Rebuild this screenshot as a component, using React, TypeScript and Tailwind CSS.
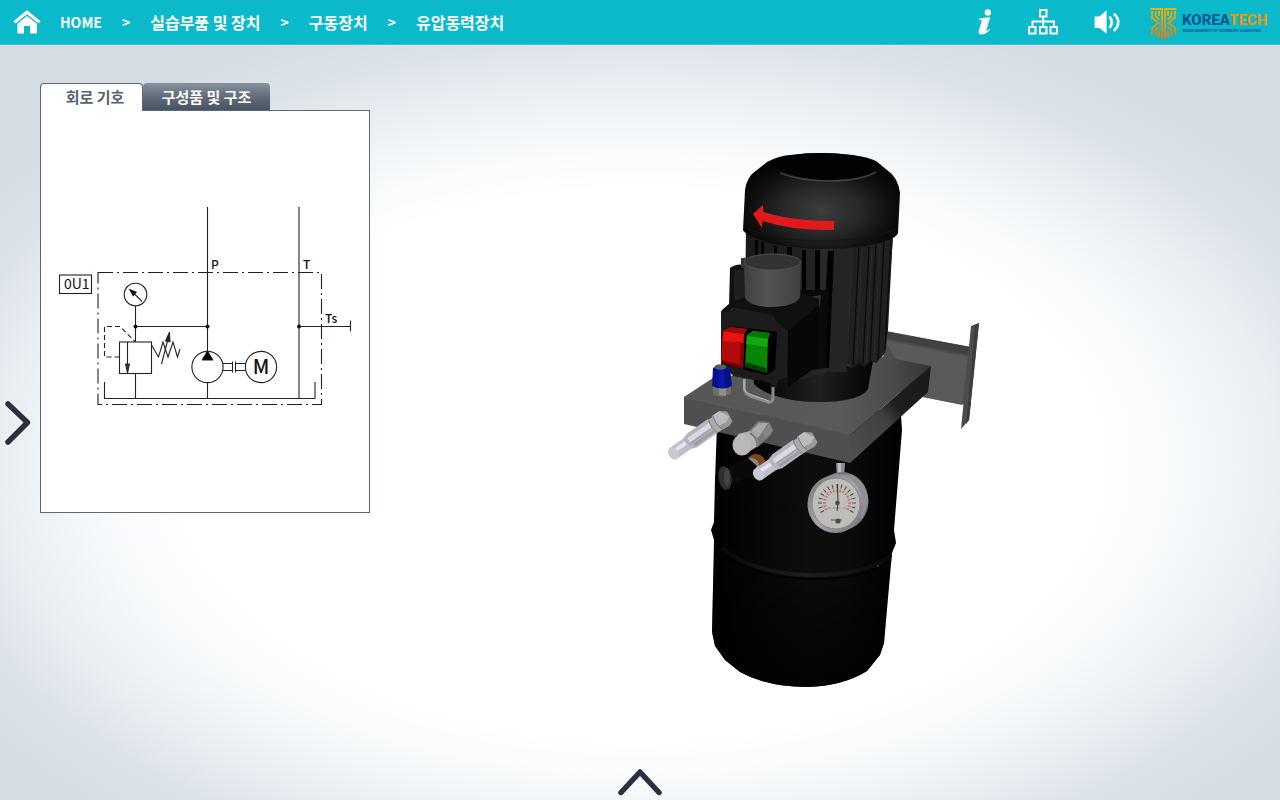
import React, { useState } from "react";

const crumbs = ["HOME", "실습부품 및 장치", "구동장치", "유압동력장치"];

function HomeIcon() {
  return (
    <svg width="28" height="24" viewBox="0 0 28 24" fill="white" aria-hidden="true">
      <path d="M14 0 L27.6 11.2 L25.6 13.4 L14 4.2 L2.4 13.4 L0.4 11.2 Z" />
      <path d="M14 6 L24 13.8 V23.6 H17 V16 H11 V23.6 H4.4 V13.8 Z" />
    </svg>
  );
}

function InfoIcon() {
  return (
    <svg width="16" height="26" viewBox="0 0 16 26" fill="white" aria-hidden="true">
      <circle cx="10.8" cy="3.4" r="3.2" />
      <path d="M3 9.4 C6 9 9 8.4 13.2 8.2 L9.6 20.4 C9.2 21.8 10 22 12.8 20 L13.2 20.8 C9.8 24.4 7 25.6 4.4 25.6 C1.8 25.6 1.2 23.8 1.8 21.6 L4.6 12.2 C5 11 4.4 10.8 1.2 11.2 Z" />
    </svg>
  );
}

function SitemapIcon() {
  return (
    <svg width="30" height="26" viewBox="0 0 30 26" fill="none" stroke="white" strokeWidth="2" aria-hidden="true">
      <rect x="12" y="1" width="6.5" height="6.5" />
      <rect x="1" y="18" width="6.5" height="6.5" />
      <rect x="12" y="18" width="6.5" height="6.5" />
      <rect x="22.5" y="18" width="6.5" height="6.5" />
      <path d="M15.2 8 V18 M4.5 18 V12.5 H26 V18" />
    </svg>
  );
}

function SoundIcon() {
  return (
    <svg width="26" height="24" viewBox="0 0 26 24" fill="none" stroke="white" strokeLinecap="round" aria-hidden="true">
      <path d="M0.6 6.4 H5.4 L12.6 0.2 V23.8 L5.4 18 H0.6 Z" fill="white" stroke="none" />
      <path d="M16 7.4 C18.4 10 18.4 14.4 16 17" strokeWidth="2.6" />
      <path d="M20.6 4.4 C25.4 8.6 25.4 15.6 20.6 20" strokeWidth="2.6" />
    </svg>
  );
}

function SchoolLogo() {
  return (
    <svg width="121" height="36" viewBox="1150 5 121 36" role="img" aria-label="KOREATECH">
      <defs>
        <linearGradient id="crest" x1="0" y1="9" x2="0" y2="40" gradientUnits="userSpaceOnUse">
          <stop offset="0" stopColor="#f0b400" />
          <stop offset="1" stopColor="#db7a1c" />
        </linearGradient>
      </defs>
      <g fill="none" stroke="url(#crest)" strokeWidth="1.9">
        <path d="M1150.5 10.01 L1162.8 10 M1152 12 V18.5 L1158.5 24 L1152 29 V35.5 M1155.6 12.5 V17 L1159.4 20.5 M1159 12 V17 M1162 9 V40 M1159.2 27.5 L1155.6 31 V37 M1159 31.5 V39" />
        <path d="M1176.5 10.01 L1164.2 10 M1175 12 V18.5 L1168.5 24 L1175 29 V35.5 M1171.4 12.5 V17 L1167.6 20.5 M1168 12 V17 M1165 9 V40 M1167.8 27.5 L1171.4 31 V37 M1168 31.5 V39" />
      </g>
      <text x="1182" y="26" fontSize="15" fontWeight="800" className="font-['Roboto',sans-serif]">
        <tspan fill="#0b5596">KOREA</tspan>
        <tspan fill="#e9980c">TECH</tspan>
      </text>
      <text x="1183" y="33" fontSize="3" fontWeight="800" fill="#0b5596" className="font-['Inter',sans-serif]">
        KOREA UNIVERSITY OF TECHNOLOGY &amp; EDUCATION
      </text>
    </svg>
  );
}

function CircuitDiagram() {
  return (
    <svg
      viewBox="41 111 328 401"
      className="block w-full font-['Noto_Sans_CJK_KR','Noto_Sans',sans-serif]"
      fill="none"
      stroke="#222"
      strokeWidth="1.1"
      role="img"
      aria-label="회로 기호"
    >
      <path d="M98 272.5 H321.5 V404.5 H98 Z" strokeDasharray="15 4 2 4" />
      <path d="M207.5 207 V351 M207.5 382.5 V398 M299 207 V398 M299 326.5 H350.5 M350.5 320.5 V331.5" />
      <path d="M104.5 382 V398.5 H315 V382" />
      <path d="M135.5 306 V342 M135.5 373 V398 M135.5 326.5 H207.5" />
      <circle cx="135.5" cy="294.5" r="11.3" />
      <path d="M142 301.500 L132 291.500" />
      <path d="M128.500 288.500 L137 292 L133 296.500 Z" fill="#111" stroke="none" />
      <rect x="119.500" y="342" width="32" height="31.500" />
      <path d="M127.500 342 V366" />
      <path d="M125.500 364 H129.500 L127.500 373 Z" fill="#333" strokeWidth="1" />
      <path d="M119.500 357 H104.500 V326.500 H120 L135 341.500" strokeDasharray="5 3" />
      <path d="M151.500 345 L158.500 357 L163 342 L168 357 L173 342 L177.500 357 L180 349" />
      <path d="M161.500 364 L168 339" />
      <path d="M169.500 332 L165.500 341 L170 342 Z" fill="#222" strokeWidth="1" />
      <circle cx="207.500" cy="367" r="15.600" />
      <path d="M207.500 351 L213 360 H202 Z" fill="#000" strokeWidth="1" />
      <path d="M223 363.500 H232 M223 370.500 H232 M232.500 361.500 V372.500 M235.500 361.500 V372.500 M236 363.500 H245.500 M236 370.500 H245.500" />
      <circle cx="261" cy="367" r="15.600" />
      <rect x="59.500" y="275" width="32" height="18.500" />
      <g fill="#111" stroke="none">
        <circle cx="135.500" cy="326.500" r="2" />
        <circle cx="207.500" cy="326.500" r="2" />
        <circle cx="299" cy="326.500" r="2" />
        <text x="64" y="289" fontSize="14">0U1</text>
        <text x="211" y="269" fontSize="12" fontWeight="500">P</text>
        <text x="303" y="269" fontSize="12" fontWeight="500">T</text>
        <text x="325" y="323" fontSize="12" fontWeight="500">Ts</text>
        <text x="261" y="374" fontSize="20" fontWeight="500" textAnchor="middle">M</text>
      </g>
    </svg>
  );
}

function Connector() {
  return (
    <g transform="rotate(145)">
      <path d="M-8 -7 L-3 -9 L6 -8 L8 0 L6 9 L-3 9 L-9 4 Z" fill="#98989a" />
      <path d="M-8 -1 L-3 -4 L6 -3 L7 5 L5 9 L-3 9 Z" fill="#bcbcbe" />
      <path d="M5 -8 H12 Q15 0 12 8 H5 Q8 0 5 -8 Z" fill="#a9a9ac" />
      <path d="M11 -8 H36 L42 -6 Q45 0 42 7 L36 9 H11 Q14 0 11 -8 Z" fill="#b4b4bd" />
      <path d="M13 0 H39 V5 H12 Z" fill="#d9d9e2" />
      <path d="M13 -6 H37 V-3 H13 Z" fill="#9c9ca5" />
      <path d="M14 -1 H38" stroke="#8b8b94" strokeWidth="0.800" />
      <path d="M11 -8 Q14 0 11 8 M5 -8 Q8 0 5 8" fill="none" stroke="#77777c" strokeWidth="0.900" />
      <path d="M41 -6 H59 V7 H41 Q44 0 41 -6 Z" fill="#bfbfca" />
      <path d="M43 0 H58 V4 H43 Z" fill="#e4e4ee" />
      <ellipse cx="59" cy="0.500" rx="5" ry="6.500" fill="#c9c9d5" />
    </g>
  );
}

const ticks = Array.from({ length: 17 }, (_, i) => -120 + i * 15);

function PowerUnit() {
  return (
    <svg viewBox="660 152 330 541" className="block w-[330px] max-w-full" role="img" aria-label="유압동력장치">
      <defs>
        <radialGradient id="cap" cx="0.5" cy="0.6" r="0.55">
          <stop offset="0" stopColor="#3d3d3d" />
          <stop offset="0.45" stopColor="#282828" />
          <stop offset="0.8" stopColor="#0f0f0f" />
          <stop offset="1" stopColor="#060606" />
        </radialGradient>
        <linearGradient id="body">
          <stop offset="0" stopColor="#191919" />
          <stop offset="0.45" stopColor="#222" />
          <stop offset="0.68" stopColor="#343434" />
          <stop offset="0.75" stopColor="#1b1b1b" />
          <stop offset="1" stopColor="#1d1d1d" />
        </linearGradient>
        <linearGradient id="base">
          <stop offset="0" stopColor="#000" />
          <stop offset="0.55" stopColor="#202020" />
          <stop offset="1" stopColor="#030303" />
        </linearGradient>
        <linearGradient id="tank">
          <stop offset="0" stopColor="#000" />
          <stop offset="0.5" stopColor="#0d0d0d" />
          <stop offset="0.7" stopColor="#0b0b0b" />
          <stop offset="1" stopColor="#000" />
        </linearGradient>
        <linearGradient id="tankShade" x1="0" y1="0" x2="0" y2="1">
          <stop offset="0" stopColor="#000" stopOpacity="0" />
          <stop offset="1" stopColor="#000" stopOpacity="0.8" />
        </linearGradient>
        <linearGradient id="ring">
          <stop offset="0" stopColor="#080808" />
          <stop offset="0.5" stopColor="#1f1f1f" />
          <stop offset="1" stopColor="#080808" />
        </linearGradient>
        <linearGradient id="cup">
          <stop offset="0" stopColor="#3f3f42" />
          <stop offset="0.4" stopColor="#545457" />
          <stop offset="1" stopColor="#404043" />
        </linearGradient>
        <linearGradient id="plateSide" x1="850" y1="450" x2="930" y2="380" gradientUnits="userSpaceOnUse">
          <stop offset="0" stopColor="#4e4e4e" />
          <stop offset="0.45" stopColor="#3f3f3f" />
          <stop offset="0.6" stopColor="#1f1f1f" />
          <stop offset="1" stopColor="#191919" />
        </linearGradient>
        <linearGradient id="plateTop" x1="690" y1="400" x2="930" y2="370" gradientUnits="userSpaceOnUse">
          <stop offset="0" stopColor="#565656" />
          <stop offset="0.6" stopColor="#5a5a5a" />
          <stop offset="0.85" stopColor="#4a4a4a" />
          <stop offset="1" stopColor="#333" />
        </linearGradient>
        <linearGradient id="rim" x1="0" y1="0" x2="1" y2="1">
          <stop offset="0" stopColor="#77777b" />
          <stop offset="0.5" stopColor="#a5a5aa" />
          <stop offset="1" stopColor="#737378" />
        </linearGradient>
      </defs>

      {/* wall bracket */}
      <path d="M886 331 L971 347 L971 406 L923 397 L880 388 Z" fill="#4d4d4d" />
      <path d="M887 332 L970 347 L968 355 L886 338 Z" fill="#414141" />
      <path d="M884 340 L968 357 L962 405 L923 397 L900 365 Z" fill="#5a5a5a" />
      <path d="M971 326 L979 323 L969 420 L961 429 Z" fill="#4c4c4c" />
      <path d="M979 323 L969 420 L966 424 L975 325 Z" fill="#3e3e3e" />

      {/* reservoir */}
      <path
        d="M717 425 L715 480 L714 522 L711 530 L714 540 L712 632 L715 646 L725 660 L740 672 Q767 687 807 687 Q843 686 867 671 L880 655 L884 643 L892 553 L896 543 L894 530 L898 480 L902 430 L901 415 L840 400 Z"
        fill="url(#tank)"
      />
      <path d="M714 548 Q807 605 891 555 L884 643 L880 655 L867 671 Q843 686 807 687 Q767 687 740 672 L725 660 L715 646 L712 632 Z" fill="url(#tankShade)" />
      <path d="M722 548 C740 565 775 574 808 575 C850 576 880 566 891 555" fill="none" stroke="url(#ring)" strokeWidth="4" />
      <path d="M724 553 C742 570 775 578 808 579 C850 580 880 571 891 559" fill="none" stroke="#000" strokeWidth="2" />
      <circle cx="878" cy="566" r="0.700" fill="#777" />

      {/* manifold plate */}
      <path d="M684 397 L713 378 L880 356 L931 366 L850 435 Z" fill="url(#plateTop)" />
      <path d="M684 397 L850 435 L850 463 L684 424 Z" fill="#4f4f4f" />
      <path d="M850 435 L931 366 L928 392 L850 463 Z" fill="url(#plateSide)" />
      <path d="M684 397 L850 435" stroke="#575757" strokeWidth="1" />

      {/* motor foot and finned body */}
      <path d="M753 372 L754 384 C765 396 795 403 827 402 C850 401 864 396 868 389 L874 355 L790 340 Z" fill="url(#base)" />
      <path d="M746 230 L745 300 L790 378 L800 380 L847 366 L852 368 L860 363 L864 367 L871 361 L876 363 L885 353 L888 330 L893 232 Z" fill="url(#body)" />
      <path d="M833 246 H851 L847 372 H826 Z" fill="#242424" />
      <path d="M854 248 L847 363 L852 366 L858 362 L864 365 L870 360 L876 361 L885 353 L893 236 Z" fill="#202020" />
      <path d="M859 248 L853 365 M869 247 L863 364 M876 245 L870 361 M884 242 L878 360 M891 240 L885 350" stroke="#0b0b0b" strokeWidth="1.300" fill="none" />
      <path d="M862 248 L856 362 M872 247 L866 362 M880 244 L874 360" stroke="#2b2b2b" strokeWidth="1" fill="none" />
      <path d="M755 240 H758 V262 H755 Z M761 242 H764 V264 H761 Z M774 246 H777 V262 H774 Z M787 247 H792 V264 H787 Z M802 250 H806 V292 H802 Z M815 250 H820 V293 H815 Z M828 251 H834 L829 368 H821 Z" fill="#000" />
      <path d="M800 290 H829 L826 368 L812 370 Z" fill="#090909" />
      <path d="M810 297 L821 295 L820 307 L815 309 Z" fill="#303030" />
      <circle cx="815" cy="302" r="2" fill="#555" />

      {/* fan cover */}
      <path
        d="M743 230 L745 190 Q747 176 757 170 L767 162 Q778 156 790 155 Q820 151 853 155 Q868 157 876 161 L887 170 Q898 177 900 193 L898 233 Q897 237 886 241 Q860 249 820 249 Q775 248 751 236 Q744 233 743 230 Z"
        fill="url(#cap)"
      />
      <path d="M768 162 Q790 153 820 153 Q860 153 881 165 Q872 178 830 180 Q790 180 768 162 Z" fill="#020202" />
      <path d="M780 173 Q800 181 830 181 Q860 181 876 172" fill="none" stroke="#505050" strokeWidth="1.500" opacity="0.700" />
      <path d="M748 229 Q775 241 820 241 Q870 240 898 229" fill="none" stroke="#151515" strokeWidth="1" />
      <path d="M753 214 L763 205 L763.500 212 Q792 221 834 221 L834 230 Q795 231 762.500 221 L762 228 Z" fill="#e01a1c" />

      {/* capacitor and cup */}
      <path d="M730 268 Q736 263 745 265 V304 L729 306 Z" fill="#111" />
      <path d="M734 270 H745 V300 H734 Z" fill="#1f1f1f" />
      <path d="M741 258 H746 V268 H741 Z" fill="#343434" />

      {/* switch box */}
      <path d="M722 310 L730 303 L745 297 L800 293 L819 299 L817 366 L788 387 L776 389 L766 382 L734 376 L721 366 Z" fill="#101010" />
      <path d="M721 311 L728 312 L732 307 L773 315 L777 322 L788 331 L787 377 L778 380 L776 388 L768 382 L734 376 L721 366 Z" fill="#1c1c1c" />
      <path d="M788 331 L819 305 L817 366 L788 387 Z" fill="#070707" />
      <path d="M723 331 L730 326 L777 332 L775 370 L766 375 L721 364 Z" fill="#000" />
      <path d="M744 262 L745 298 Q750 307 772 307 Q796 306 800 297 L801 262 Z" fill="url(#cup)" />
      <ellipse cx="772.500" cy="262" rx="28" ry="8" fill="#333336" stroke="#4f4f52" strokeWidth="1" />
      <path d="M723 331 L730 327 L747 329 L744 334 L743 369 L721 363 Z" fill="#b50a0a" />
      <path d="M724 331 L744 334 L743 344 L740 342 L722 341 Z" fill="#e81212" />
      <path d="M740 342 L744 344 L743 369 L740 366 Z" fill="#800" />
      <path d="M723 331 L730 327 L747 329 L744 334 Z" fill="#9d0909" />
      <path d="M722 360 L741 365 L743 369 L721 363 Z" fill="#650000" />
      <path d="M747 335 L753 331 L770 333 L768 340 L767 373 L745 366 Z" fill="#078507" />
      <path d="M747 336 L768 339 L767 347 L746 344 Z" fill="#12a812" />
      <path d="M747 335 L753 331 L770 333 L768 338 Z" fill="#087408" />
      <path d="M746 362 L766 368 L767 373 L745 367 Z" fill="#034203" />

      {/* handle loop, valve cap */}
      <path d="M744.500 379 V388 Q744 393 750 396 L768 402 Q773 403 773 397 V387" fill="none" stroke="#8c8c8c" strokeWidth="3" />
      <path d="M744 380 V389 Q745 393 752 395 L769 401" fill="none" stroke="#c2c2c2" strokeWidth="1" />
      <path d="M713 386 L731 386 L731 394 L722 397 L713 395 Z" fill="#6e6e6c" />
      <path d="M719 388 H726 V396 L719 395 Z" fill="#8e8e8b" />
      <path d="M713 368 Q721 362 730 368 L732 386 Q722 391 712 386 Z" fill="#07108a" />
      <path d="M718 369 L724 369 L725 388 L718 388 Z" fill="#0a17a5" />
      <ellipse cx="720.500" cy="367" rx="6" ry="2.700" fill="#555b60" />

      {/* drain knob */}
      <ellipse cx="756" cy="464" rx="10" ry="10" fill="#804321" />
      <ellipse cx="751" cy="466" rx="8" ry="8" fill="#8a8a8a" />
      <path d="M728 468 L748 458 L757 466 L752 476 L732 484 Z" fill="#0c0c0c" />
      <ellipse cx="744" cy="470" rx="11" ry="9" fill="#080808" />
      <ellipse cx="725" cy="478" rx="6.500" ry="12" transform="rotate(-10 725 478)" fill="#2f2f2f" />
      <ellipse cx="727" cy="477" rx="3" ry="9" fill="#444" />

      {/* hose connectors */}
      <g transform="translate(722 420)">
        <Connector />
      </g>
      <g>
        <path d="M748 432 L758 421 L769 422 L773 430 L770 436 L758 447 Z" fill="#77777a" />
        <path d="M751 431 L759 423 L768 423 L763 431 L758 438 Z" fill="#a9a9ac" />
        <path d="M763 431 L770 424 L773 431 L764 440 Z" fill="#858588" />
        <path d="M738 434 L750 431 Q760 438 758 446 L744 455 Z" fill="#b3b3b3" />
        <ellipse cx="742" cy="445" rx="9.500" ry="10.500" fill="#b9b9b9" />
        <path d="M750 433 Q758 438 757 446" fill="none" stroke="#74746d" strokeWidth="1.500" />
      </g>
      <g transform="translate(807 441)">
        <Connector />
      </g>

      {/* pressure gauge */}
      <path d="M836 463 H845 L844 478 H837 Z" fill="#8f8f8c" />
      <path d="M838 463 H841 V478 H838 Z" fill="#bcbcb9" />
      <ellipse cx="842" cy="501" rx="26.500" ry="29" fill="#77777c" />
      <path d="M834 474 L852 475 Q868 483 868 503 L862 519 L836 500 Z" fill="#909095" />
      <ellipse cx="835.500" cy="504" rx="28" ry="29" fill="url(#rim)" />
      <ellipse cx="836" cy="503.500" rx="24" ry="25.500" fill="#bebdb9" stroke="#88888b" strokeWidth="1" />
      {ticks.map((a) => (
        <g key={a} transform={`rotate(${a} 837 503)`}>
          <path d="M837 484 V488" stroke="#484848" strokeWidth="1" />
          <path d="M837 489 V492" stroke="#b55349" strokeWidth="1.600" opacity="0.600" />
        </g>
      ))}
      <path d="M837.500 484 L838 503 L837 511" stroke="#333" strokeWidth="1" fill="none" />
      <circle cx="837.500" cy="503" r="2.300" fill="#494949" />
      <path d="M828 508 H846" stroke="#999" strokeWidth="1.500" strokeDasharray="3 2" />
      <circle cx="838" cy="521" r="2.600" fill="#4b4b4b" />
      <path d="M831 520 H842" stroke="#555" strokeWidth="1" />
    </svg>
  );
}

export default function App() {
  const [tab, setTab] = useState(0);
  return (
    <div className="relative flex min-h-screen flex-col overflow-hidden bg-white bg-[radial-gradient(ellipse_58%_55%_at_50%_58%,#ffffff_0%,#ffffff_62%,#f5f8fa_75%,#e9eef2_86%,#dce3ea_96%,#d5dce4_108%)] font-['Noto_Sans_CJK_KR',sans-serif]">
      <header className="flex h-[45px] items-center border-b border-[#48bdca] bg-[#0ab9ca] pr-[9px] pl-[13px] text-base text-white">
        <a href="#home" aria-label="HOME">
          <HomeIcon />
        </a>
        <nav aria-label="breadcrumb" className="ml-[19px] flex items-center gap-5 font-bold whitespace-nowrap">
          {crumbs.map((c, i) => (
            <React.Fragment key={c}>
              {i > 0 && <span className="text-sm">&gt;</span>}
              <a href={`#level-${i}`} className={i === 0 ? "text-sm" : "text-base"}>
                {c}
              </a>
            </React.Fragment>
          ))}
        </nav>
        <div className="ml-auto flex items-center">
          <button aria-label="정보" className="mr-[35px]">
            <InfoIcon />
          </button>
          <button aria-label="사이트맵" className="mr-9">
            <SitemapIcon />
          </button>
          <button aria-label="소리" className="mr-[30px]">
            <SoundIcon />
          </button>
          <SchoolLogo />
        </div>
      </header>

      <main className="flex flex-1">
        <button aria-label="메뉴 열기" className="flex w-10 items-center self-center pl-[3px]">
          <svg width="30" height="48" viewBox="0 0 30 48" fill="none" strokeLinecap="round" strokeLinejoin="round" aria-hidden="true">
            <path d="M5 5 L24.500 23.500 L5 43" stroke="white" strokeOpacity="0.500" strokeWidth="8" />
            <path d="M5 5 L24.500 23.500 L5 43" stroke="#2a303e" strokeWidth="5.500" />
          </svg>
        </button>

        <section className="w-[330px] shrink-0 pt-[38px]">
          <div role="tablist" className="flex items-start text-[15px] leading-[22px] font-bold">
            <button
              role="tab"
              aria-selected={tab === 0}
              onClick={() => setTab(0)}
              className="relative z-10 -mb-px h-[28px] w-[103px] rounded-t border border-b-0 border-[#5c6978] bg-white pb-[2px] pl-[7px] text-[#566170]"
            >
              회로 기호
            </button>
            <button
              role="tab"
              aria-selected={tab === 1}
              onClick={() => setTab(1)}
              className="h-[27px] w-[127px] rounded-t bg-linear-to-b from-[#8a929f] via-[#626c7a] to-[#485463] text-white"
            >
              구성품 및 구조
            </button>
          </div>
          <div role="tabpanel" className="border border-[#5c6978] bg-white">
            <CircuitDiagram />
          </div>
        </section>

        <section className="flex flex-1 items-center justify-center">
          <PowerUnit />
        </section>
      </main>

      <button aria-label="도구 열기" className="absolute bottom-0 left-1/2 -translate-x-1/2">
        <svg width="50" height="36" viewBox="0 0 50 36" fill="none" strokeLinecap="round" strokeLinejoin="round" aria-hidden="true">
          <path d="M6 28.500 L25 8 L44 28.500" stroke="white" strokeOpacity="0.500" strokeWidth="8" />
          <path d="M6 28.500 L25 8 L44 28.500" stroke="#2a303e" strokeWidth="5.500" />
        </svg>
      </button>
    </div>
  );
}
